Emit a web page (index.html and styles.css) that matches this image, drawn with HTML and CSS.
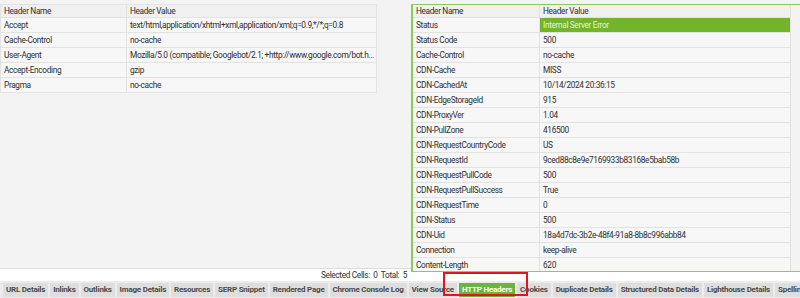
FILE: index.html
```html
<!DOCTYPE html>
<html lang="en">
<head>
    <meta charset="UTF-8">
    <title>HTTP Headers</title>
    <link rel="stylesheet" href="styles.css">
</head>
<body>
    <div class="main">
        <div class="panel-left">
            <div class="top-strip"></div>
            <table class="grid grid-left">
                <tr class="head"><th class="c1">Header Name</th><th>Header Value</th></tr>
                <tr><td class="c1">Accept</td><td>text/html,application/xhtml+xml,application/xml;q=0.9,*/*;q=0.8</td></tr>
                <tr><td class="c1">Cache-Control</td><td>no-cache</td></tr>
                <tr><td class="c1">User-Agent</td><td>Mozilla/5.0 (compatible; Googlebot/2.1; +http://www.google.com/bot.h...</td></tr>
                <tr><td class="c1">Accept-Encoding</td><td>gzip</td></tr>
                <tr><td class="c1">Pragma</td><td>no-cache</td></tr>
            </table>
            <div class="spacer"></div>
            <div class="statusbar">Selected Cells:&nbsp; 0&nbsp; Total:&nbsp; 5</div>
        </div>

        <div class="panel-right">
            <div class="top-strip"></div>
            <div class="right-box">
                <table class="grid grid-right">
                    <tr class="head"><th class="c1">Header Name</th><th>Header Value</th></tr>
                    <tr><td class="c1">Status</td><td class="err">Internal Server Error</td></tr>
                    <tr><td class="c1">Status Code</td><td>500</td></tr>
                    <tr><td class="c1">Cache-Control</td><td>no-cache</td></tr>
                    <tr><td class="c1">CDN-Cache</td><td>MISS</td></tr>
                    <tr><td class="c1">CDN-CachedAt</td><td>10/14/2024 20:36:15</td></tr>
                    <tr><td class="c1">CDN-EdgeStorageId</td><td>915</td></tr>
                    <tr><td class="c1">CDN-ProxyVer</td><td>1.04</td></tr>
                    <tr><td class="c1">CDN-PullZone</td><td>416500</td></tr>
                    <tr><td class="c1">CDN-RequestCountryCode</td><td>US</td></tr>
                    <tr><td class="c1">CDN-RequestId</td><td>9ced88c8e9e7169933b83168e5bab58b</td></tr>
                    <tr><td class="c1">CDN-RequestPullCode</td><td>500</td></tr>
                    <tr><td class="c1">CDN-RequestPullSuccess</td><td>True</td></tr>
                    <tr><td class="c1">CDN-RequestTime</td><td>0</td></tr>
                    <tr><td class="c1">CDN-Status</td><td>500</td></tr>
                    <tr><td class="c1">CDN-Uid</td><td>18a4d7dc-3b2e-48f4-91a8-8b8c996abb84</td></tr>
                    <tr><td class="c1">Connection</td><td>keep-alive</td></tr>
                    <tr><td class="c1">Content-Length</td><td>620</td></tr>
                </table>
            </div>
            <div class="white-strip"></div>
        </div>
    </div>

    <div class="tabs">
        <span class="tab">URL Details</span>
        <span class="tab">Inlinks</span>
        <span class="tab">Outlinks</span>
        <span class="tab">Image Details</span>
        <span class="tab">Resources</span>
        <span class="tab">SERP Snippet</span>
        <span class="tab">Rendered Page</span>
        <span class="tab">Chrome Console Log</span>
        <span class="tab">View Source</span>
        <span class="tab active">HTTP Headers</span>
        <span class="tab">Cookies</span>
        <span class="tab">Duplicate Details</span>
        <span class="tab">Structured Data Details</span>
        <span class="tab">Lighthouse Details</span>
        <span class="tab">Spelling &amp; Grammar</span>
    </div>

    <div class="highlight"></div>
</body>
</html>
```

FILE: styles.css
```css
body {
    margin: 0;
    width: 800px;
    height: 298px;
    overflow: hidden;
    background-color: #f3f3f3;
    font-family: Roboto, "Liberation Sans", sans-serif;
    font-size: 8.3px;
    letter-spacing: -0.35px;
    color: #2e2e2e;
    position: relative;
}
.main {
    display: flex;
    height: 281px;
}
.panel-left {
    width: 411px;
    display: flex;
    flex-direction: column;
}
.top-strip {
    height: 4px;
    flex: none;
}
.grid {
    border-collapse: collapse;
    table-layout: fixed;
    background: #f7f7f7;
}
.grid th, .grid td {
    height: 14px;
    padding: 0 3px;
    text-align: left;
    font-weight: normal;
    white-space: nowrap;
    overflow: hidden;
    border: 1px solid #e2e2e2;
    line-height: 14px;
}
.grid .head th {
    height: 12px;
    line-height: 12px;
    background: #f0f0f0;
}
.grid-left {
    width: 377px;
}
.grid-left .c1 {
    width: 119px;
}
.spacer {
    flex: 1;
    border-bottom: 1px solid #dcdcdc;
}
.statusbar {
    height: 12px;
    line-height: 12px;
    background: #fff;
    text-align: right;
    padding-right: 4px;
}
.panel-right {
    flex: 1;
    display: flex;
    flex-direction: column;
}
.right-box {
    height: 266px;
    overflow: hidden;
    border: 1px solid #8cc863;
    border-width: 1px 0 1px 1px;
    border-left-width: 2px;
    background: #f3f3f3;
}
.grid-right {
    width: 378px;
}
.grid-right .c1 {
    width: 120px;
}
.grid-right td:first-child, .grid-right th:first-child {
    border-left: none;
}
.grid-right tr:first-child th {
    border-top: none;
}
.err {
    background: #72b52d;
    color: #e3f3d2;
}
.white-strip {
    flex: 1;
    background: #fff;
}
.tabs {
    height: 17px;
    display: flex;
    align-items: center;
    gap: 2px;
    padding-left: 3px;
    background: #ececec;
    overflow: hidden;
    white-space: nowrap;
    font-size: 8px;
    letter-spacing: -0.22px;
}
.tab {
    flex: none;
    background: #dedede;
    color: #4a4a4a;
    font-weight: bold;
    padding: 0 3px;
    height: 14px;
    line-height: 14px;
}
.tab.active {
    background: #6db33f;
    color: #fff;
}
.highlight {
    position: absolute;
    left: 443px;
    top: 272px;
    width: 81px;
    height: 20px;
    border: 2px solid #e0161a;
}
```
